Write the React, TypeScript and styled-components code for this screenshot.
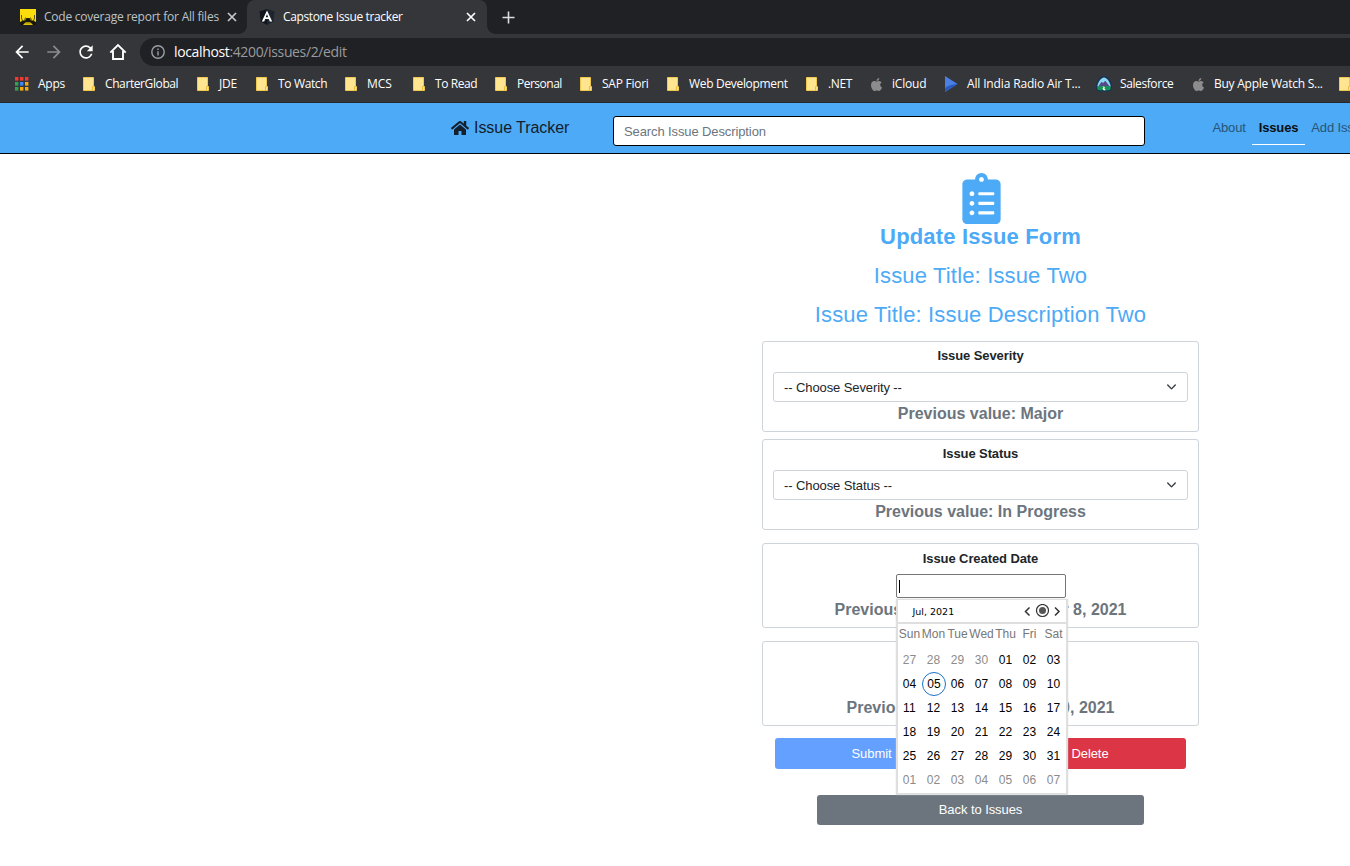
import React from "react";
import styled, { createGlobalStyle } from "styled-components";
import { FaApple, FaClipboardList, FaHome } from "react-icons/fa";
import { MdArrowBack, MdArrowForward, MdRefresh } from "react-icons/md";

const GlobalStyle = createGlobalStyle`
  *, *::before, *::after { box-sizing: border-box; }
  body {
    margin: 0;
    background: #fff;
    overflow: hidden;
    font-family: "Liberation Sans", Arial, sans-serif;
  }
`;

const Window = styled.div`
  width: 1350px;
  height: 866px;
  overflow: hidden;
  display: flex;
  flex-direction: column;
`;

/* ---------- browser chrome ---------- */

const Chrome = styled.header`
  flex: none;
  height: 103px;
  background: #35363a;
  border-bottom: 1px solid #26272a;
  font-family: "Open Sans", "Noto Sans", sans-serif;
  font-size: 12px;
  color: #fff;
  white-space: nowrap;
`;

const TabStrip = styled.div`
  display: flex;
  height: 34px;
  background: #202124;
`;

const Tab = styled.div<{ $active?: boolean; $width: number; $pad: number }>`
  position: relative;
  display: flex;
  align-items: center;
  width: ${(p) => p.$width}px;
  padding-left: ${(p) => p.$pad}px;
  color: ${(p) => (p.$active ? "#fff" : "#bdc1c6")};
  background: ${(p) => (p.$active ? "#35363a" : "transparent")};
  border-radius: ${(p) => (p.$active ? "8px 8px 0 0" : "0")};
  &::before,
  &::after {
    content: "";
    display: ${(p) => (p.$active ? "block" : "none")};
    position: absolute;
    bottom: 0;
    width: 8px;
    height: 8px;
  }
  &::before {
    left: -8px;
    background: radial-gradient(circle at 0 0, transparent 7.5px, #35363a 8px);
  }
  &::after {
    right: -8px;
    background: radial-gradient(circle at 100% 0, transparent 7.5px, #35363a 8px);
  }
`;

const TabTitle = styled.span<{ $width: number; $spacing: number }>`
  width: ${(p) => p.$width}px;
  margin-left: 8px;
  padding-bottom: 1px;
  letter-spacing: ${(p) => p.$spacing}px;
`;

const NewTab = styled.div`
  display: flex;
  align-items: center;
  padding-left: 15px;
`;

const Toolbar = styled.div`
  display: flex;
  align-items: center;
  height: 36px;
  padding-left: 12px;
  svg { flex: none; }
`;

const NavButton = styled.span<{ $dim?: boolean }>`
  display: flex;
  justify-content: center;
  width: 20px;
  margin-right: 12px;
  color: ${(p) => (p.$dim ? "#8b8c8f" : "#fff")};
`;

const AddressBar = styled.div`
  display: flex;
  align-items: center;
  flex: 1;
  height: 28px;
  padding-left: 11px;
  border-radius: 14px 0 0 14px;
  background: #202124;
  color: #9aa0a6;
  font-size: 14px;
`;

const Url = styled.span`
  margin-left: 9px;
  padding-bottom: 1px;
  letter-spacing: -0.36px;
  color: #9a9b9e;
  b { font-weight: 400; color: #fff; }
`;

const Bookmarks = styled.div`
  display: flex;
  align-items: center;
  height: 28px;
  padding-left: 14px;
`;

const Bookmark = styled.div`
  display: flex;
  flex: none;
  align-items: center;
  gap: 8px;
`;

const BookmarkIcon = styled.span`
  display: flex;
  justify-content: center;
  width: 16px;
  color: #8c8c8c;
`;

const BookmarkLabel = styled.span<{ $width: number; $spacing: number }>`
  width: ${(p) => p.$width}px;
  padding-bottom: 2px;
  letter-spacing: ${(p) => p.$spacing}px;
`;

const CloseIcon = ({ color }: { color: string }) => (
  <svg width="10" height="10" viewBox="0 0 10 10" stroke={color} strokeWidth="1.7">
    <path d="M1 1l8 8M9 1l-8 8" />
  </svg>
);

const CoverageIcon = () => (
  <svg width="16" height="16" viewBox="0 0 16 16">
    <path fill="#fbdc0d" d="M0 0h16v16H0z" />
    <path fill="none" stroke="#5f540a" d="M1.500 6v3l1 3M14.500 6v3l-1 3M4.500 11.500l1-3M11.500 11.500l-1-3" />
    <path fill="#17160a" d="M0 13l3-1.500h2L6.500 9h3l1.500 2.500h2l3 1.500v3h-3l-2.500-2.500h-5L3 16H0z" />
    <path fill="#bfa60c" d="M3.500 15.500L6 13.500h4l2.500 2z" />
  </svg>
);

const AngularIcon = () => (
  <svg width="16" height="16" viewBox="0 0 16 16">
    <path fill="#10151f" d="M8 0l7.4 2.6-1.1 9.8L8 16l-6.3-3.6L.6 2.6z" />
    <path fill="#28303c" d="M8 0l7.4 2.6-1.1 9.8L8 16z" opacity=".6" />
    <path fill="#fff" fillRule="evenodd" d="M8 1.600L2.800 12.600h2.400l1-2.500h3.600l1 2.500h2.400zM8 5.200l1.300 3.100H6.700z" />
  </svg>
);

const PlusIcon = () => (
  <svg width="13" height="13" viewBox="0 0 13 13" stroke="#dcdde0" strokeWidth="1.6">
    <path d="M6.500 .5v12M.5 6.500h12" />
  </svg>
);

const HomeOutline = () => (
  <svg width="18" height="18" viewBox="0 0 18 18" fill="none" stroke="#fff" strokeWidth="1.9">
    <path d="M1.300 9.600L9 2l7.700 7.600M4 8v8h10V8" />
  </svg>
);

const InfoIcon = () => (
  <svg width="14" height="14" viewBox="0 0 14 14" fill="none" stroke="#9aa0a6" strokeWidth="1.4">
    <circle cx="7" cy="7" r="6.2" />
    <path d="M7 6.200v4.200M7 3.600v1.400" />
  </svg>
);

const AppsIcon = () => {
  const colors = ["#f23b30", "#f23b30", "#f23b30", "#35a155", "#3d86f5", "#f5a912", "#35a155", "#f5a912", "#f5a912"];
  return (
    <svg width="14" height="14" viewBox="0 0 14 14">
      {colors.map((c, i) => (
        <rect key={i} x={(i % 3) * 5} y={Math.floor(i / 3) * 5} width="3.4" height="3.6" fill={c} />
      ))}
    </svg>
  );
};

const FolderIcon = () => (
  <svg width="12" height="14" viewBox="0 0 12 14">
    <path fill="#ffe590" stroke="#f0c84f" d="M.5 .5h10v9h1v4H.5z" />
    <path fill="none" stroke="#e8bd42" d="M9.500 13.500v-4h1.500" />
  </svg>
);

const PlayIcon = () => (
  <svg width="14" height="16" viewBox="0 0 14 16">
    <path fill="#4a80e4" d="M1 0l12.500 8L1 16z" />
    <path fill="#2a5cc0" d="M1 12c4-3 8-4 12.500-4L1 16z" />
  </svg>
);

const TrailheadIcon = () => (
  <svg width="16" height="16" viewBox="0 0 16 16">
    <path fill="#10345c" d="M8 .3C12 .3 16 6.500 16 11c0 3-2 4.500-4 4.500H4c-2 0-4-1.500-4-4.500C0 6.500 4 .3 8 .3z" />
    <path fill="#8fd6f5" d="M8 1.500c3 0 6.300 5.300 6.700 9H1.300C1.700 6.800 5 1.500 8 1.500z" />
    <path fill="#574a86" d="M2.200 10.500L5.500 5.700 7 7l2.300-2.200 4.500 5.700z" />
    <path fill="#159553" d="M1.200 10.800Q8 9 14.800 10.800q.2 3.500-2.300 3.500h-9q-2.500 0-2.300-3.500z" />
    <path fill="#fff" d="M6.500 10.300l2.700 1-1 .8 1.500 2.200H7.600L6.500 12.200l1-.7z" />
  </svg>
);

const folders: [string, number, number][] = [
  ["CharterGlobal", 90, -0.4],
  ["JDE", 35, -0.25],
  ["To Watch", 65, -0.35],
  ["MCS", 44, -0.1],
  ["To Read", 58, -0.4],
  ["Personal", 61, -0.5],
  ["SAP Fiori", 63, -0.25],
  ["Web Development", 115, -0.32],
  [".NET", 40, -0.4],
];

const links: [string, number, number, React.ReactNode][] = [
  ["iCloud", 51, -0.2, <FaApple size={15} />],
  ["All India Radio Air T...", 129, -0.15, <PlayIcon />],
  ["Salesforce", 70, -0.4, <TrailheadIcon />],
  ["Buy Apple Watch S...", 125, -0.25, <FaApple size={15} />],
];

/* ---------- application ---------- */

const AppNav = styled.nav`
  flex: none;
  display: flex;
  align-items: flex-start;
  height: 51px;
  padding-left: 451px;
  background: #4daaf6;
  border-bottom: 1px solid #000;
  font-size: 13px;
  white-space: nowrap;
`;

const Brand = styled.a`
  display: flex;
  flex: none;
  align-items: center;
  gap: 5px;
  width: 162px;
  height: 49px;
  font-size: 16px;
  letter-spacing: -0.05px;
  color: #14202c;
`;

const Search = styled.div`
  display: flex;
  flex: none;
  align-items: center;
  width: 532px;
  height: 30px;
  margin: 13px 61px 0 0;
  padding-left: 10px;
  border: 1px solid #000;
  border-radius: 3px;
  background: #fff;
  color: #6c757d;
  letter-spacing: -0.11px;
`;

const NavLink = styled.a<{ $active?: boolean }>`
  flex: none;
  height: 42px;
  padding: 17px 6.500px 0;
  line-height: 15px;
  letter-spacing: -0.15px;
  font-weight: ${(p) => (p.$active ? 700 : 400)};
  color: ${(p) => (p.$active ? "#0a0f14" : "#275577")};
  border-bottom: 1px solid ${(p) => (p.$active ? "#fff" : "transparent")};
`;

const Form = styled.main`
  width: 437px;
  margin: 19px 0 0 762px;
  display: flex;
  flex-direction: column;
  align-items: center;
  color: #212529;
`;

const FormIcon = styled.div`
  display: flex;
  padding-left: 1px;
  color: #4daaf6;
`;

const Heading = styled.h2<{ $bold?: boolean }>`
  margin: 0 0 13px;
  height: 26px;
  line-height: 26px;
  font-size: 22px;
  font-weight: ${(p) => (p.$bold ? 700 : 400)};
  letter-spacing: 0.16px;
  color: #4daaf6;
  white-space: nowrap;
`;

const Card = styled.section<{ $height: number; $gap: number }>`
  position: relative;
  display: flex;
  flex-direction: column;
  align-items: center;
  width: 100%;
  height: ${(p) => p.$height}px;
  margin-bottom: ${(p) => p.$gap}px;
  padding: 6px 10px 0;
  border: 1px solid #ced4da;
  border-radius: 3px;
`;

const FieldLabel = styled.label<{ $drop?: boolean }>`
  height: 24px;
  padding-top: ${(p) => (p.$drop ? 1 : 0)}px;
  line-height: 16px;
  font-size: 13px;
  font-weight: 700;
  letter-spacing: -0.09px;
`;

const Select = styled.div`
  display: flex;
  align-items: center;
  justify-content: space-between;
  width: 100%;
  height: 30px;
  padding: 0 10px;
  border: 1px solid #ced4da;
  border-radius: 3px;
  font-size: 13px;
  letter-spacing: -0.1px;
`;

const Previous = styled.p<{ $width?: number }>`
  display: flex;
  justify-content: space-between;
  gap: 4px;
  width: ${(p) => (p.$width ? `${p.$width}px` : "auto")};
  margin: 1px 0 0;
  line-height: 22px;
  font-size: 16px;
  font-weight: 700;
  color: #6c757d;
  white-space: nowrap;
`;

const DateField = styled.div`
  position: relative;
  width: 170px;
  height: 24px;
  padding: 5px 0 0 2px;
  border: 1px solid #767676;
  border-radius: 2px;
  background: #fff;
`;

const Caret = styled.span`
  display: block;
  width: 1px;
  height: 13px;
  background: #000;
`;

const Calendar = styled.div`
  position: absolute;
  z-index: 2;
  top: 24px;
  left: -1px;
  width: 172px;
  height: 196px;
  background: #fff;
  border: 2px solid #dfdfdf;
  border-top-width: 1px;
  box-shadow: 0 0 1px #ccc;
  color: #000;
`;

const MonthBar = styled.div`
  display: flex;
  align-items: center;
  justify-content: space-between;
  height: 24px;
  padding: 0 4px 0 15px;
  border-bottom: 2px solid #dfdfdf;
  font-family: "DejaVu Sans", sans-serif;
  font-size: 9.500px;
`;

const Days = styled.div`
  display: grid;
  grid-template-columns: repeat(7, 24px);
  grid-template-rows: 20px repeat(6, 24px);
  align-items: center;
  justify-items: center;
`;

const DayName = styled.span`
  font-size: 12px;
  color: #777;
`;

const Day = styled.span<{ $muted?: boolean; $today?: boolean }>`
  display: flex;
  align-items: center;
  justify-content: center;
  width: 24px;
  height: 24px;
  margin-top: 8px;
  border: 1px solid ${(p) => (p.$today ? "#1a73c7" : "transparent")};
  border-radius: 50%;
  padding: 0 0 1px ${(p) => (p.$today ? 1 : 0)}px;
  font-size: 12px;
  letter-spacing: 0.2px;
  color: ${(p) => (p.$muted ? "#8c8c8c" : "#000")};
`;

const Actions = styled.div`
  display: flex;
  justify-content: space-between;
  width: 411px;
  margin-bottom: 26px;
`;

const Button = styled.button<{ $bg: string; $width: number; $height: number }>`
  width: ${(p) => p.$width}px;
  height: ${(p) => p.$height}px;
  padding: 0 0 1px;
  border: 0;
  border-radius: 3px;
  background: ${(p) => p.$bg};
  color: #fff;
  font: 13px "Liberation Sans", Arial, sans-serif;
  letter-spacing: -0.07px;
`;

const Chevron = () => (
  <svg width="11" height="11" viewBox="0 0 16 16" fill="none" stroke="#343a40" strokeWidth="2" strokeLinecap="round" strokeLinejoin="round">
    <path d="M2.500 4.500l5.500 5.500 5.500-5.500" />
  </svg>
);

const MonthArrows = () => (
  <svg width="38" height="14" viewBox="0 0 38 14" fill="none" stroke="#333" strokeWidth="1.500">
    <path d="M5.500 3.500l-4 4 4 4M31 3.500l4 4-4 4" />
    <circle cx="18.500" cy="6.500" r="6" strokeWidth="1.200" />
    <circle cx="18.500" cy="6.500" r="3.500" fill="#555" stroke="none" />
  </svg>
);

const dayNames = ["Sun", "Mon", "Tue", "Wed", "Thu", "Fri", "Sat"];
const days = Array.from({ length: 42 }, (_, i) => {
  const offset = i - 4;
  const muted = offset < 0 || offset > 30;
  const value = offset < 0 ? 31 + offset : (offset % 31) + 1;
  return { text: String(value).padStart(2, "0"), muted, today: offset === 4 };
});

const DatePicker = () => (
  <Calendar>
    <MonthBar>
      <span>Jul, 2021</span>
      <MonthArrows />
    </MonthBar>
    <Days>
      {dayNames.map((name) => (
        <DayName key={name}>{name}</DayName>
      ))}
      {days.map((day, i) => (
        <Day key={i} $muted={day.muted} $today={day.today}>
          {day.text}
        </Day>
      ))}
    </Days>
  </Calendar>
);

export default function App() {
  return (
    <Window>
      <GlobalStyle />
      <Chrome>
        <TabStrip>
          <Tab $width={247} $pad={20}>
            <CoverageIcon />
            <TabTitle $width={183} $spacing={-0.23}>Code coverage report for All files</TabTitle>
            <CloseIcon color="#c6c8cb" />
          </Tab>
          <Tab $active $width={240} $pad={12}>
            <AngularIcon />
            <TabTitle $width={183} $spacing={-0.36}>Capstone Issue tracker</TabTitle>
            <CloseIcon color="#fff" />
          </Tab>
          <NewTab>
            <PlusIcon />
          </NewTab>
        </TabStrip>
        <Toolbar>
          <NavButton><MdArrowBack size={20} /></NavButton>
          <NavButton $dim><MdArrowForward size={20} /></NavButton>
          <NavButton><MdRefresh size={20} /></NavButton>
          <NavButton><HomeOutline /></NavButton>
          <AddressBar>
            <InfoIcon />
            <Url><b>localhost</b>:4200/issues/2/edit</Url>
          </AddressBar>
        </Toolbar>
        <Bookmarks>
          <Bookmark>
            <BookmarkIcon><AppsIcon /></BookmarkIcon>
            <BookmarkLabel $width={43} $spacing={-0.25}>Apps</BookmarkLabel>
          </Bookmark>
          {folders.map(([name, width, spacing]) => (
            <Bookmark key={name}>
              <BookmarkIcon><FolderIcon /></BookmarkIcon>
              <BookmarkLabel $width={width} $spacing={spacing}>{name}</BookmarkLabel>
            </Bookmark>
          ))}
          {links.map(([name, width, spacing, icon]) => (
            <Bookmark key={name}>
              <BookmarkIcon>{icon}</BookmarkIcon>
              <BookmarkLabel $width={width} $spacing={spacing}>{name}</BookmarkLabel>
            </Bookmark>
          ))}
          <BookmarkIcon><FolderIcon /></BookmarkIcon>
        </Bookmarks>
      </Chrome>

      <AppNav>
        <Brand>
          <FaHome size={18} />
          <span>Issue Tracker</span>
        </Brand>
        <Search>Search Issue Description</Search>
        <NavLink>About</NavLink>
        <NavLink $active>Issues</NavLink>
        <NavLink>Add Issue</NavLink>
      </AppNav>

      <Form>
        <FormIcon><FaClipboardList size={51} /></FormIcon>
        <Heading $bold>Update Issue Form</Heading>
        <Heading>Issue Title: Issue Two</Heading>
        <Heading>Issue Title: Issue Description Two</Heading>
        <Card $height={91} $gap={7}>
          <FieldLabel>Issue Severity</FieldLabel>
          <Select>-- Choose Severity --<Chevron /></Select>
          <Previous>Previous value: Major</Previous>
        </Card>
        <Card $height={91} $gap={13}>
          <FieldLabel>Issue Status</FieldLabel>
          <Select>-- Choose Status --<Chevron /></Select>
          <Previous>Previous value: In Progress</Previous>
        </Card>
        <Card $height={85} $gap={13}>
          <FieldLabel $drop>Issue Created Date</FieldLabel>
          <DateField>
            <Caret />
            <DatePicker />
          </DateField>
          <Previous $width={292}>
            <span>Previous value:</span>
            <span>September 8, 2021</span>
          </Previous>
        </Card>
        <Card $height={85} $gap={12}>
          <FieldLabel />
          <DateField />
          <Previous $width={268}>
            <span>Previous value:</span>
            <span>October 10, 2021</span>
          </Previous>
        </Card>
        <Actions>
          <Button $bg="#64a0ff" $width={193} $height={31}>Submit</Button>
          <Button $bg="#dc3545" $width={192} $height={31}>Delete</Button>
        </Actions>
        <Button $bg="#6c757d" $width={327} $height={30}>Back to Issues</Button>
      </Form>
    </Window>
  );
}
